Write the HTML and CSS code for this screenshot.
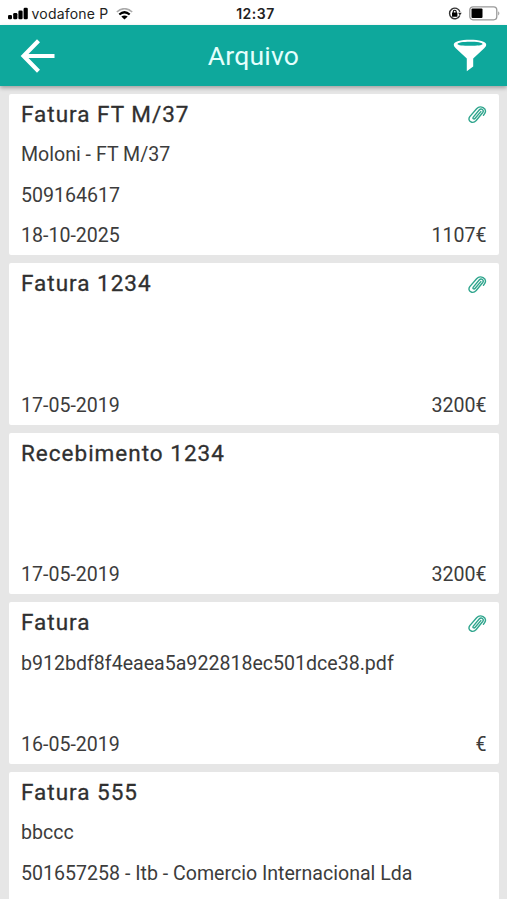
FILE: index.html
```html
<!DOCTYPE html>
<html lang="pt">
<head>
<meta charset="utf-8">
<title>Arquivo</title>
<link rel="stylesheet" href="styles.css">
</head>
<body>
<svg width="0" height="0" class="defs" aria-hidden="true">
  <symbol id="clip" viewBox="0 0 20 20">
    <path d="M13.8 6.6 8.200 13.300C6.900 14.800 5.200 13.500 6.300 12.100L12.200 5C14.300 2.700 17.400 5 15.700 7.500L9.200 15.500C5.700 19.600 -.2 15.800 2.800 11.600L9.600 3.700C13.400 -.4 20.300 3.600 17.900 8.200L16.400 10.300"/>
  </symbol>
</svg>
<div class="screen">
  <div class="status">
    <div class="carrier">
      <svg class="signal" width="20" height="13" viewBox="0 0 20 13"><rect x="0" y="8" width="4" height="4.300" rx="1.300"/><rect x="5.200" y="6" width="4.200" height="6.300" rx="1.300"/><rect x="10.400" y="3.500" width="4.200" height="8.800" rx="1.300"/><rect x="15.600" y="0.800" width="4.200" height="11.500" rx="1.300"/></svg>
      <span class="operator">vodafone P</span>
      <svg class="wifi" width="17" height="12" viewBox="0 0 17 12" fill="none"><path d="M.8 4Q8.5-2.6 16.2 4" stroke="#aaa" stroke-width="1.6"/><path d="M3.3 6.5Q8.5 2 13.7 6.5" stroke="#000" stroke-width="2.2"/><path d="M5.3 8.6Q8.5 6.2 11.7 8.6L8.5 11.6Z" fill="#000"/></svg>
    </div>
    <span class="time">12:37</span>
    <div class="power">
      <svg width="14" height="13" viewBox="0 0 14 13"><path d="M11.8 8.4A5.3 5.3 0 1 1 11.9 4.8" fill="none" stroke="#333" stroke-width="1.4"/><path d="M10.1 5.8h3.600l-1.800 2.600z" fill="#222"/><rect x="4" y="5.600" width="5.400" height="4.200" rx=".5"/><path d="M5.200 6V4.800a1.500 1.500 0 0 1 3 0V6" fill="none" stroke="#000" stroke-width="1.1"/></svg>
      <svg width="32" height="15" viewBox="0 0 32 15"><rect x=".8" y=".8" width="27" height="13" rx="3.200" fill="#fff" stroke="#999" stroke-width="1.300"/><rect x="2.500" y="2.500" width="11" height="9.600" rx="1"/><path d="M29.300 5.200q2 2.100 0 4.200z" fill="#888"/></svg>
    </div>
  </div>
  <header class="bar">
    <svg class="back" width="36" height="36" viewBox="0 0 36 36"><path d="M18.500 2.800 3.600 18 18.500 33.200M4 18H34.500" fill="none" stroke="#fff" stroke-width="4.200"/></svg>
    <h1>Arquivo</h1>
    <svg class="filter" width="34" height="33" viewBox="0 0 34 33"><path fill="#fff" fill-rule="evenodd" d="M17 .8C8 .8.8 2.500.8 5.500c0 1.500.7 2.500 2 3.800L13.800 19.500V32.200L20.200 27.600V19.500L31.200 9.300c1.300-1.300 2-2.300 2-3.800C33.200 2.500 26 .8 17 .8ZM17 2.800C24 2.800 29.500 3.700 29.500 4.900S24 6.800 17 6.800 4.500 6.100 4.500 4.900 10 2.800 17 2.800Z"/></svg>
  </header>
  <main class="list">
    <article class="card">
      <div class="row"><h2>Fatura FT M/37</h2><svg class="clip"><use href="#clip"/></svg></div>
      <div class="row">Moloni - FT M/37</div>
      <div class="row">509164617</div>
      <div class="row"><span>18-10-2025</span><span>1107€</span></div>
    </article>
    <article class="card">
      <div class="row"><h2>Fatura 1234</h2><svg class="clip"><use href="#clip"/></svg></div>
      <div class="row"></div>
      <div class="row"></div>
      <div class="row"><span>17-05-2019</span><span>3200€</span></div>
    </article>
    <article class="card">
      <div class="row"><h2>Recebimento 1234</h2></div>
      <div class="row"></div>
      <div class="row"></div>
      <div class="row"><span>17-05-2019</span><span>3200€</span></div>
    </article>
    <article class="card">
      <div class="row"><h2>Fatura</h2><svg class="clip"><use href="#clip"/></svg></div>
      <div class="row">b912bdf8f4eaea5a922818ec501dce38.pdf</div>
      <div class="row"></div>
      <div class="row"><span>16-05-2019</span><span>€</span></div>
    </article>
    <article class="card">
      <div class="row"><h2>Fatura 555</h2></div>
      <div class="row">bbccc</div>
      <div class="row">501657258 - Itb - Comercio Internacional Lda</div>
      <div class="row"></div>
    </article>
  </main>
</div>
</body>
</html>
```
FILE: styles.css
```css
* { box-sizing: border-box; }
body { margin: 0; background: #fff; font-family: Roboto, sans-serif; color: #3c3c3c; }
.defs { position: absolute; }
.screen { height: 899px; overflow: hidden; background: #e6e6e6; }
.status {
  height: 25px; padding: 2px 6px 0 8px; background: #fff; color: #222;
  display: grid; grid-template-columns: 1fr auto 1fr; align-items: center;
  font-family: Inter, sans-serif; font-size: 14px;
}
.carrier, .power { display: flex; align-items: center; }
.operator { margin-left: 3.5px; font-size: 14px; letter-spacing: .2px; }
.wifi { margin-left: 7.5px; }
.time { font-weight: 600; font-size: 14px; letter-spacing: .5px; padding-left: 2px; }
.power { justify-content: flex-end; gap: 7px; }
.bar {
  position: relative; height: 61px; padding: 0 20px 0 20px;
  background: #0ea89c; box-shadow: 0 2px 4px rgba(0, 0, 0, .3);
  display: grid; grid-template-columns: 1fr auto 1fr; align-items: center;
}
.bar h1 { margin: 0; color: #e4fffc; font-size: 26.5px; font-weight: 400; line-height: 30px; letter-spacing: .2px; }
.back { margin-left: -.5px; }
.filter { justify-self: end; }
.list { padding: 7.7px 8px 0 8.5px; display: grid; gap: 8px; }
.card { height: 161.5px; padding: 0 12.5px; background: #fff; border-radius: 2px; }
.row {
  height: 40.3px; display: flex; align-items: center; justify-content: space-between;
  font-size: 19.58px; white-space: nowrap;
}
.row:not(:first-child) { padding-top: 1.6px; }
.row h2 { margin: 0; font-size: 22.5px; font-weight: 400; letter-spacing: 1px; color: #303030; -webkit-text-stroke: .3px #303030; }
.clip { width: 20px; height: 20px; margin-top: 3px; fill: none; stroke: #2fa58d; stroke-width: 1.4; stroke-linecap: round; }
```
